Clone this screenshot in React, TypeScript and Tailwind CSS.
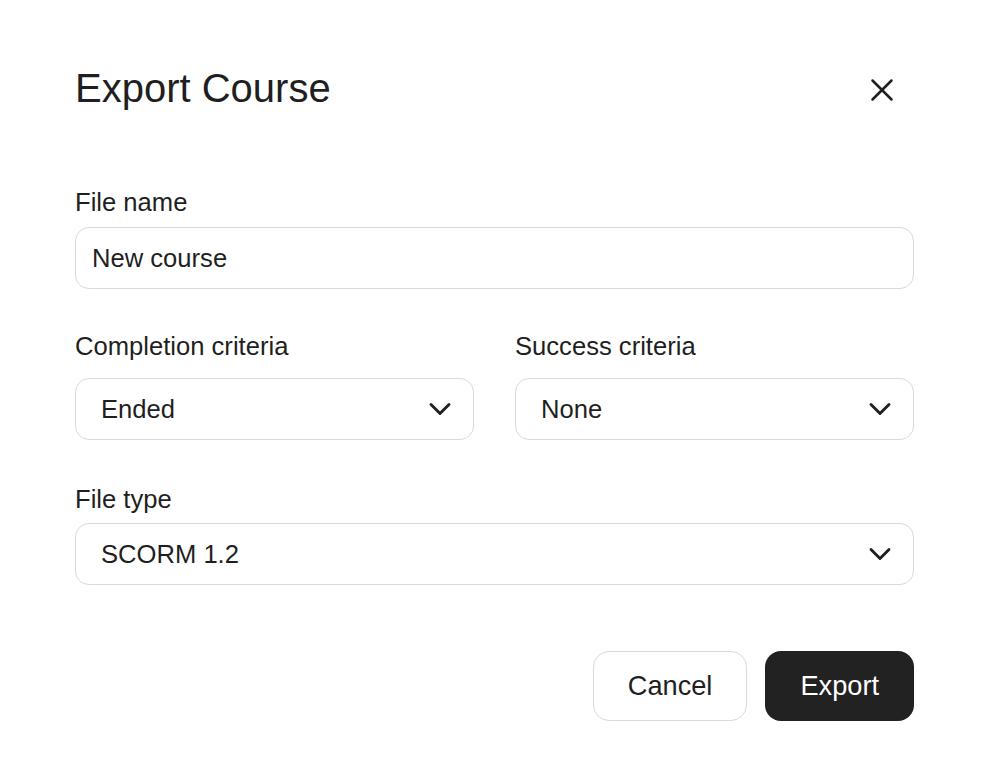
import { ReactNode } from 'react'

const font = { fontFamily: '"Liberation Sans", Arial, Helvetica, sans-serif' }

function Chevron() {
  return (
    <svg width="36" height="36" viewBox="0 0 24 24" fill="none" stroke="#1f1f1f" strokeWidth="1.9" strokeLinecap="round" strokeLinejoin="round">
      <path d="m6 9 6 6 6-6" />
    </svg>
  )
}

function CloseIcon() {
  return (
    <svg width="38" height="38" viewBox="0 0 24 24" fill="none" stroke="#1f1f1f" strokeWidth="1.6" strokeLinecap="round">
      <path d="M18 6 6 18" />
      <path d="m6 6 12 12" />
    </svg>
  )
}

function Label({ children }: { children: ReactNode }) {
  return <div className="text-[25.6px] leading-[32px] text-[#1f1f1f]">{children}</div>
}

function Select({ value }: { value: string }) {
  return (
    <button className="flex h-[62px] w-full items-center justify-between rounded-[14px] border-[1.6px] border-[#dadada] bg-white pl-[25px] pr-[15px] text-left text-[25.6px] text-[#1f1f1f]">
      <span>{value}</span>
      <Chevron />
    </button>
  )
}

export default function App() {
  return (
    <div className="h-[780px] w-full bg-white pl-[75px] pr-[68px] pt-[64px]" style={font}>
      <div className="flex h-[48px] items-center justify-between">
        <h2 className="text-[40px] leading-[48px] text-[#1f1f1f]">Export Course</h2>
        <button className="mr-[13px] mt-[4px]">
          <CloseIcon />
        </button>
      </div>

      <div className="mt-[74px]">
        <Label>File name</Label>
        <input
          readOnly
          value="New course"
          className="mt-[9px] h-[62px] w-full rounded-[14px] border-[1.6px] border-[#dadada] bg-white px-[16px] text-[25.6px] text-[#1f1f1f] outline-none"
        />
      </div>

      <div className="mt-[41px] grid grid-cols-2 gap-x-[41px]">
        <div>
          <Label>Completion criteria</Label>
          <div className="mt-[16px]">
            <Select value="Ended" />
          </div>
        </div>
        <div>
          <Label>Success criteria</Label>
          <div className="mt-[16px]">
            <Select value="None" />
          </div>
        </div>
      </div>

      <div className="mt-[43px]">
        <Label>File type</Label>
        <div className="mt-[8px]">
          <Select value="SCORM 1.2" />
        </div>
      </div>

      <div className="mt-[66px] flex justify-end gap-[18px]">
        <button className="h-[70px] rounded-[16px] border-[1.6px] border-[#dadada] bg-white px-[34px] text-[27.2px] text-[#1f1f1f]">
          Cancel
        </button>
        <button className="h-[70px] rounded-[16px] bg-[#222222] px-[35px] text-[27.2px] text-white">
          Export
        </button>
      </div>
    </div>
  )
}
